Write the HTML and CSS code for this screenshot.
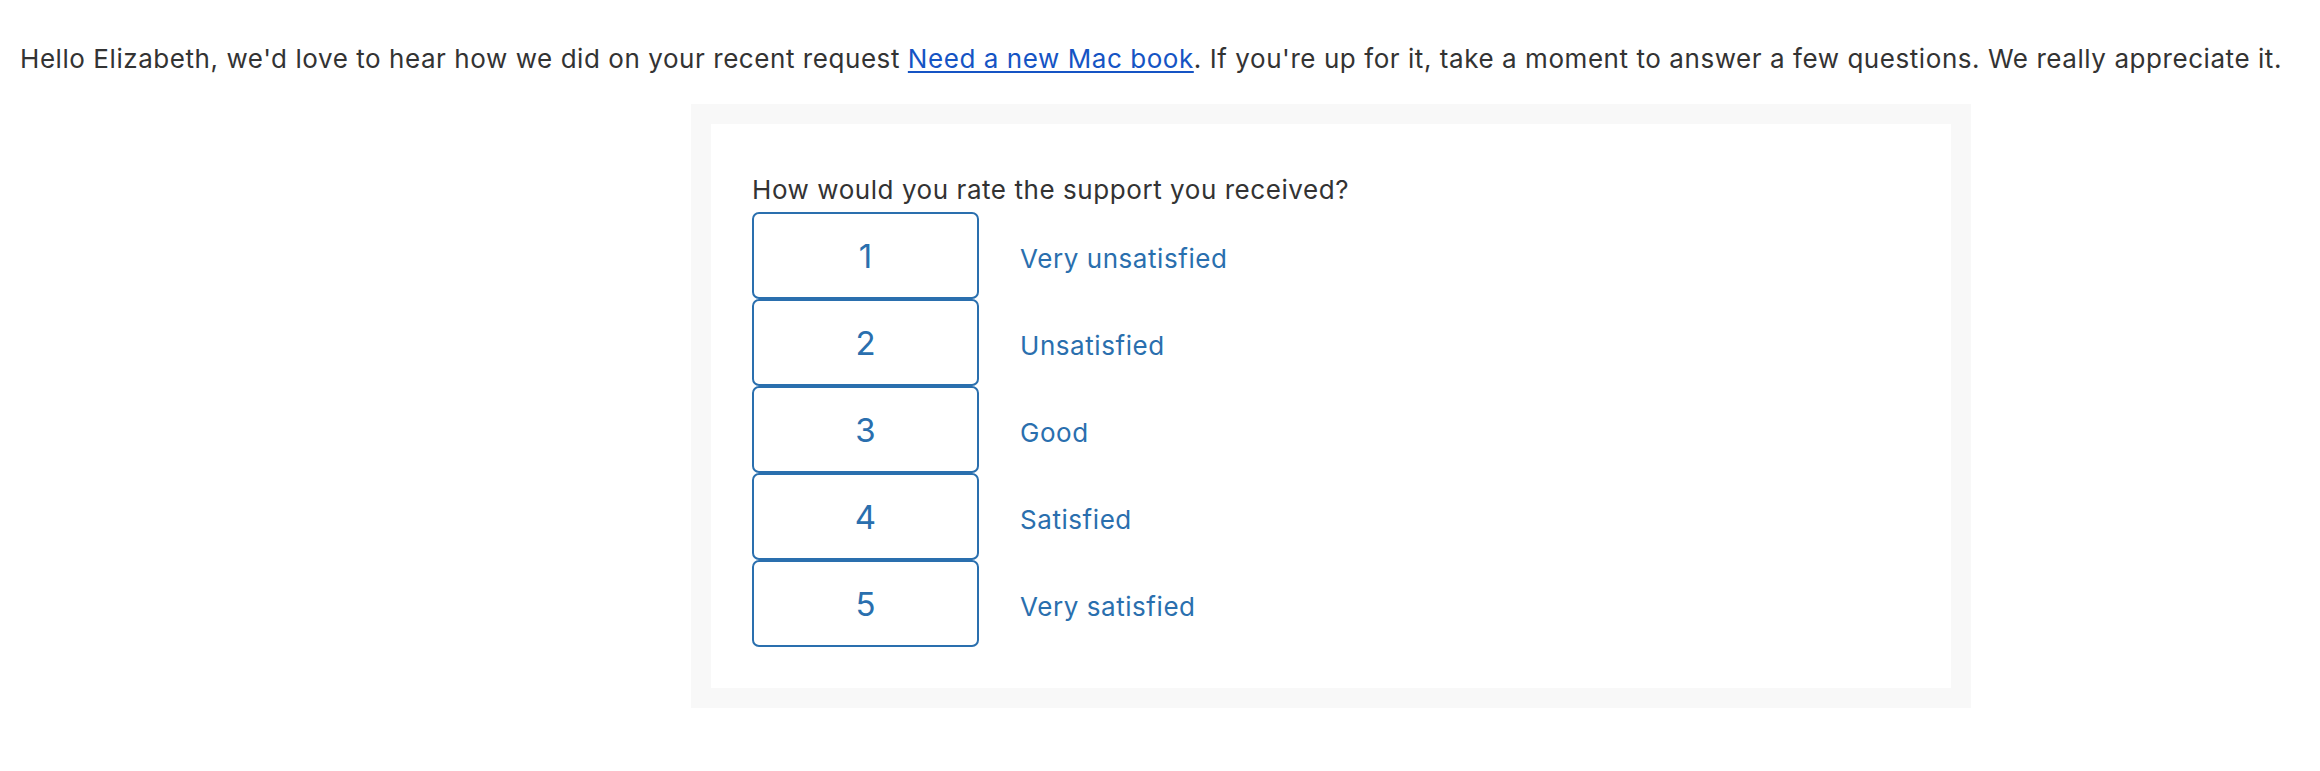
FILE: index.html
```html
<!DOCTYPE html>
<html lang="en">
<head>
<meta charset="utf-8">
<title>Survey</title>
<link rel="stylesheet" href="styles.css">
</head>
<body>
<p class="intro">Hello Elizabeth, we'd love to hear how we did on your recent request <a href="#" class="intro-link">Need a new Mac book</a>. If you're up for it, take a moment to answer a few questions. We really appreciate it.</p>
<div class="survey-frame">
  <div class="survey-card">
    <p class="question">How would you rate the support you received?</p>
    <ul class="ratings">
      <li class="rating"><a href="#" class="rating-btn">1</a><a href="#" class="rating-label">Very unsatisfied</a></li>
      <li class="rating"><a href="#" class="rating-btn">2</a><a href="#" class="rating-label">Unsatisfied</a></li>
      <li class="rating"><a href="#" class="rating-btn">3</a><a href="#" class="rating-label">Good</a></li>
      <li class="rating"><a href="#" class="rating-btn">4</a><a href="#" class="rating-label">Satisfied</a></li>
      <li class="rating"><a href="#" class="rating-btn">5</a><a href="#" class="rating-label">Very satisfied</a></li>
    </ul>
  </div>
</div>
</body>
</html>
```
FILE: styles.css
```css
html, body {
  margin: 0;
  padding: 0;
  background: #ffffff;
}
body {
  font-family: Inter, "Liberation Sans", Arial, sans-serif;
  font-size: 26px;
  letter-spacing: 0.56px;
  color: #333333;
  padding: 41px 21px 40px 20px;
}
.intro {
  margin: 0;
  line-height: 36px;
  white-space: nowrap;
}
.intro-link {
  color: #1554c4;
  text-decoration: underline;
  text-decoration-thickness: 2px;
  text-underline-offset: 3px;
}
.survey-frame {
  margin: 27px 0 0 671px;
  width: 1280px;
  box-sizing: border-box;
  padding: 20px;
  background: #f8f8f8;
}
.survey-card {
  background: #ffffff;
  padding: 48px 41px 41px 41px;
}
.question {
  margin: 0 0 4px 0;
  line-height: 36px;
  color: #333333;
}
.ratings {
  list-style: none;
  margin: 0;
  padding: 0;
  display: flex;
  flex-direction: column;
}
.rating {
  display: flex;
  align-items: center;
  gap: 41px;
}
.rating-btn {
  display: flex;
  align-items: center;
  justify-content: center;
  box-sizing: border-box;
  width: 227px;
  height: 87px;
  border: 2px solid #2a6fae;
  border-radius: 7px;
  color: #2a6fae;
  font-size: 33px;
  letter-spacing: 0;
  text-decoration: none;
}
.rating-label {
  color: #2a6fae;
  text-decoration: none;
  line-height: 36px;
  margin-top: 6px;
}
```
